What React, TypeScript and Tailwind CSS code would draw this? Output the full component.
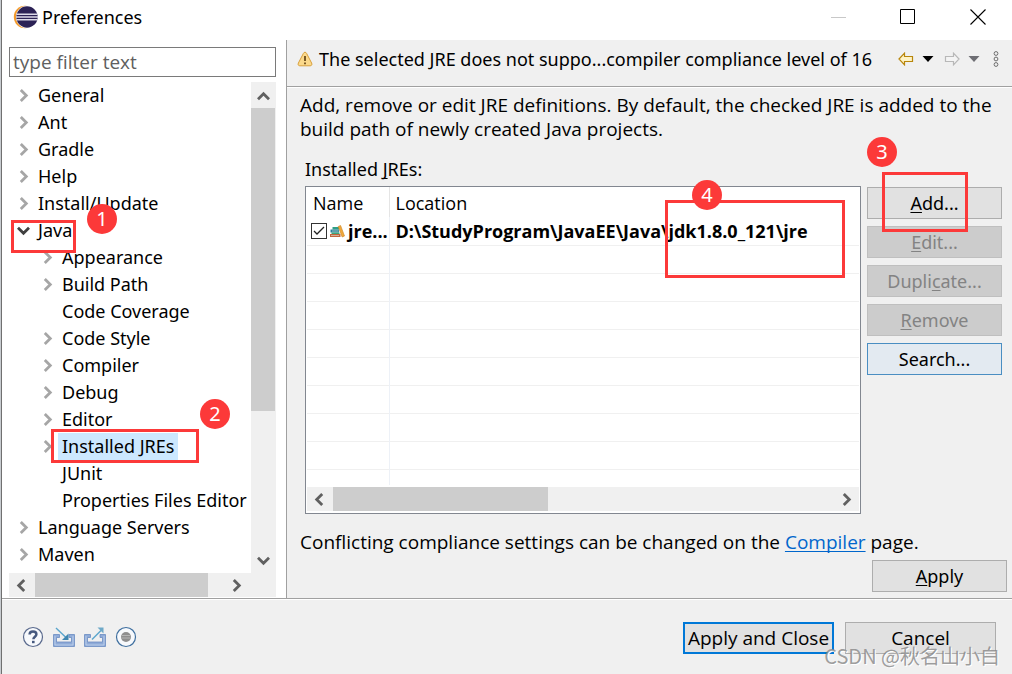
import { useState } from 'react';
import type { ReactNode } from 'react';
import clsx from 'clsx';

interface TreeNode {
  label: string;
  level: 0 | 1;
  state: 'closed' | 'open' | 'leaf';
}

const TREE: TreeNode[] = [
  { label: 'General', level: 0, state: 'closed' },
  { label: 'Ant', level: 0, state: 'closed' },
  { label: 'Gradle', level: 0, state: 'closed' },
  { label: 'Help', level: 0, state: 'closed' },
  { label: 'Install/Update', level: 0, state: 'closed' },
  { label: 'Java', level: 0, state: 'open' },
  { label: 'Appearance', level: 1, state: 'closed' },
  { label: 'Build Path', level: 1, state: 'closed' },
  { label: 'Code Coverage', level: 1, state: 'leaf' },
  { label: 'Code Style', level: 1, state: 'closed' },
  { label: 'Compiler', level: 1, state: 'closed' },
  { label: 'Debug', level: 1, state: 'closed' },
  { label: 'Editor', level: 1, state: 'closed' },
  { label: 'Installed JREs', level: 1, state: 'closed' },
  { label: 'JUnit', level: 1, state: 'leaf' },
  { label: 'Properties Files Editor', level: 1, state: 'leaf' },
  { label: 'Language Servers', level: 0, state: 'closed' },
  { label: 'Maven', level: 0, state: 'closed' },
];

const EMPTY_ROWS = 8;

type Direction = 'up' | 'down' | 'left' | 'right';

const CHEVRONS: Record<Direction, string> = {
  up: 'M1 11.2 6.5 5.7 12 11.2',
  down: 'M1 3.8 6.5 9.3 12 3.8',
  left: 'M9.2 1 3.7 6.5 9.2 12',
  right: 'M3.8 1 9.3 6.5 3.8 12',
};

function Chevron({ dir, color = '#606060' }: { dir: Direction; color?: string }) {
  return (
    <svg width="13" height="13" viewBox="0 0 13 13" fill="none" className="shrink-0">
      <path d={CHEVRONS[dir]} stroke={color} strokeWidth="2.8" />
    </svg>
  );
}

function ScrollArrow({ dir }: { dir: Direction }) {
  return (
    <button aria-label={`Scroll ${dir}`} className="flex size-[25px] shrink-0 items-center justify-center">
      <Chevron dir={dir} />
    </button>
  );
}

// Numbered red marker of the walkthrough
function Step({ n, className }: { n: number; className: string }) {
  return (
    <span
      className={clsx(
        'pointer-events-none absolute z-20 flex size-[30px] items-center justify-center rounded-full bg-[#fc3939] text-xl leading-none text-white',
        className
      )}
    >
      {n}
    </span>
  );
}

function Frame({ className }: { className: string }) {
  return <span className={clsx('pointer-events-none absolute z-10 border-3 border-[#fc3939]', className)} />;
}

interface PushButtonProps {
  children: ReactNode;
  disabled?: boolean;
  className?: string;
}

function PushButton({ children, disabled, className = 'w-[135px] border border-[#adadad] bg-[#e1e1e1]' }: PushButtonProps) {
  return (
    <button
      disabled={disabled}
      className={clsx(
        'flex h-8 shrink-0 items-center justify-center whitespace-nowrap',
        disabled ? 'w-[135px] border border-[#bfbfbf] bg-[#cccccc] text-[#838383]' : className
      )}
    >
      <span>{children}</span>
    </button>
  );
}

function Mnemonic({ children }: { children: string }) {
  return <span className="underline decoration-1 underline-offset-2 [text-decoration-skip-ink:none]">{children}</span>;
}

function EclipseLogo() {
  return (
    <svg width="25" height="24" viewBox="0 0 25 24" className="shrink-0">
      <circle cx="12" cy="12" r="11.2" fill="#f39a2b" />
      <circle cx="14.2" cy="12" r="11.2" fill="#fff" />
      <circle cx="14" cy="12" r="10.7" fill="#2c2255" />
      <path d="M3.4 9.2h21.1M3 12h22M3.4 14.8h21.1" stroke="#dcd9e8" strokeWidth="1.4" />
    </svg>
  );
}

function TitleBar() {
  return (
    <header className="flex h-10 shrink-0 items-center bg-white pb-1.5 pl-[11px]">
      <div className="flex flex-1 items-center gap-1">
        <EclipseLogo />
        <h1>Preferences</h1>
      </div>
      <div className="flex items-center gap-12 pr-[26px]">
        <button aria-label="Minimize" disabled>
          <svg width="22" height="16" viewBox="0 0 22 16">
            <path d="M1 8.5h15" stroke="#c8c8c8" />
          </svg>
        </button>
        <button aria-label="Maximize">
          <svg width="22" height="16" viewBox="0 0 22 16">
            <path d="M.5 .5h14v14H.5z" fill="none" stroke="#000" />
          </svg>
        </button>
        <button aria-label="Close">
          <svg width="16" height="16" viewBox="0 0 16 16">
            <path d="M.5 .5 15.5 15.5M15.5 .5 .5 15.5" stroke="#000" strokeWidth="1.1" />
          </svg>
        </button>
      </div>
    </header>
  );
}

function Sidebar() {
  const [filter, setFilter] = useState('');
  const [selected, setSelected] = useState('Installed JREs');

  return (
    <aside className="flex w-[284px] shrink-0 flex-col bg-white pt-[7px] pr-2.5 pl-[7px]">
      <input
        aria-label="Filter"
        value={filter}
        onChange={e => setFilter(e.target.value)}
        placeholder="type filter text"
        className="h-[30px] w-full border border-[#7a7a7a] px-[3px] font-['Open_Sans',sans-serif] text-[19px] outline-none placeholder:text-[#606060]"
      />

      <div className="mt-[5px] flex flex-1">
        <ul className="relative min-w-0 flex-1">
          {TREE.map(node => (
            <li key={node.label}>
              <button
                onClick={() => setSelected(node.label)}
                className={clsx('flex h-[27px] items-center whitespace-nowrap', node.level === 0 ? 'pl-2' : 'pl-8')}
              >
                <span className="flex w-[17px] shrink-0">
                  {node.state !== 'leaf' && (
                    <Chevron
                      dir={node.state === 'open' ? 'down' : 'right'}
                      color={node.state === 'open' ? '#404040' : '#a6a6a6'}
                    />
                  )}
                </span>
                <span className={clsx('px-1 leading-[27px]', selected === node.label && 'bg-[#cce8ff]')}>
                  {node.label}
                </span>
              </button>
            </li>
          ))}
          <Frame className="top-[138px] left-[2px] h-[33px] w-[65px]" />
          <Step n={1} className="top-[122px] left-[78px]" />
          <Frame className="top-[347px] left-[42px] h-[34px] w-[148px]" />
          <Step n={2} className="top-[317px] left-[191px]" />
        </ul>
        <div className="flex w-[25px] shrink-0 flex-col bg-[#f0f0f0]">
          <ScrollArrow dir="up" />
          <div className="flex-1 py-px">
            <div className="h-[69%] w-6 bg-[#cdcdcd]" />
          </div>
          <ScrollArrow dir="down" />
        </div>
      </div>

      <div className="mb-px flex h-6 shrink-0 bg-[#f0f0f0] pr-[27px]">
        <ScrollArrow dir="left" />
        <div className="flex-1 px-px">
          <div className="h-full w-[92%] bg-[#cdcdcd]" />
        </div>
        <ScrollArrow dir="right" />
      </div>
    </aside>
  );
}

function PageHeader() {
  return (
    <div className="flex h-[46px] shrink-0 items-center gap-1.5 pr-3 pb-2 pl-2.5">
      <svg width="16" height="16" viewBox="0 0 16 16" className="shrink-0">
        <path
          d="M8 1.2c.8 0 1.2.5 1.6 1.2l5 9.6c.7 1.5.2 2.8-1.4 2.8H2.8c-1.6 0-2.1-1.3-1.4-2.8l5-9.6C6.8 1.7 7.2 1.2 8 1.2z"
          fill="#fbd98b"
          stroke="#d9a03c"
        />
        <path d="M8 5v5M8 11.5v1.8" stroke="#6b4a1a" strokeWidth="1.8" />
      </svg>
      <h2 className="min-w-0 flex-1 whitespace-nowrap">The selected JRE does not suppo...compiler compliance level of 16</h2>
      <div className="flex shrink-0 items-center gap-2">
        <button aria-label="Back">
          <svg width="16" height="14" viewBox="0 0 16 14" className="block">
            <path d="M1 7 6.5 1.2v3.3h8v5h-8v3.3z" fill="#fff3c4" stroke="#b8860b" strokeWidth="1.2" />
          </svg>
        </button>
        <button aria-label="Back history">
          <svg width="12" height="14" viewBox="0 0 12 14" className="block">
            <path d="M.5 4h11L6 10z" fill="#000" />
          </svg>
        </button>
        <button aria-label="Forward" className="pl-0.5">
          <svg width="16" height="14" viewBox="0 0 16 14" className="block">
            <path d="M15 7 9.5 1.2v3.3h-8v5h8v3.3z" fill="#f4f4f4" stroke="#b8b8b8" strokeWidth="1.2" />
          </svg>
        </button>
        <button aria-label="Forward history">
          <svg width="12" height="14" viewBox="0 0 12 14" className="block">
            <path d="M.5 4h11L6 10z" fill="#6e6e73" />
          </svg>
        </button>
        <button aria-label="View menu" className="pl-1">
          <svg width="8" height="16" viewBox="0 0 8 16" className="block">
            <g fill="none" stroke="#6e6e6e">
              <circle cx="4" cy="2.5" r="1.9" />
              <circle cx="4" cy="8" r="1.9" />
              <circle cx="4" cy="13.5" r="1.9" />
            </g>
          </svg>
        </button>
      </div>
    </div>
  );
}

function LibraryIcon() {
  return (
    <svg width="15" height="14" viewBox="0 0 15 14" className="shrink-0">
      <path d="M2.5 3h6.500v2.500H2.500z" fill="#2f9f86" />
      <path d="M.5 5.500h8.500v3H.5z" fill="#2d7f9a" />
      <path d="M1.500 8.500h8v1.500h-8z" fill="#3aa57c" />
      <path d="M0 10h10.500v3H0z" fill="#c4643c" />
      <path d="M2 7h6.500M1 11.500h8" stroke="#d9e6dc" strokeWidth=".6" />
      <path d="M8.200 2.500 10.600 1.500l3.900 10.500-2.400 1z" fill="#f0a83c" stroke="#c98420" strokeWidth=".6" />
    </svg>
  );
}

function JreTable() {
  const [checked, setChecked] = useState(true);

  return (
    <div className="relative flex min-w-0 flex-1 flex-col border border-[#828790] bg-white">
      <div className="flex-1 overflow-hidden px-px">
        <table className="w-full table-fixed border-collapse text-left font-['Open_Sans',sans-serif]">
          <thead>
            <tr className="h-[30px]">
              <th className="w-[82px] border-r border-[#e5e5e5] p-0 pt-0.5 pl-[6px] font-normal">Name</th>
              <th className="p-0 pt-0.5 pl-[6px] font-normal">Location</th>
            </tr>
          </thead>
          <tbody>
            <tr className="h-7 border-b border-[#f0f0f0] font-bold">
              <td className="border-r border-[#edf1f7] p-0">
                <label className="flex items-center gap-[3px] pl-1 whitespace-nowrap">
                  <span className="relative flex size-4 shrink-0">
                    <input
                      type="checkbox"
                      checked={checked}
                      onChange={e => setChecked(e.target.checked)}
                      className="size-4 appearance-none border border-[#333333] bg-white"
                    />
                    {checked && (
                      <svg width="16" height="16" viewBox="0 0 16 16" fill="none" className="pointer-events-none absolute inset-0">
                        <path d="M3 8l3 3 7-7" stroke="#222" strokeWidth="1.3" />
                      </svg>
                    )}
                  </span>
                  <LibraryIcon />
                  jre...
                </label>
              </td>
              <td className="truncate py-0 pr-0 pl-[6px]">D:\StudyProgram\JavaEE\Java\jdk1.8.0_121\jre</td>
            </tr>
            {Array.from({ length: EMPTY_ROWS }, (_, i) => (
              <tr key={i} className="h-7 border-b border-[#f0f0f0]">
                <td className="border-r border-[#edf1f7]" />
                <td />
              </tr>
            ))}
            <tr className="h-4">
              <td className="border-r border-[#edf1f7] p-0" />
              <td className="p-0" />
            </tr>
          </tbody>
        </table>
      </div>
      <div className="mx-px mb-0.5 flex h-6 shrink-0 items-center bg-[#f0f0f0]">
        <ScrollArrow dir="left" />
        <div className="h-full flex-1 px-px">
          <div className="h-full w-[43%] bg-[#cdcdcd]" />
        </div>
        <ScrollArrow dir="right" />
      </div>
      <Frame className="top-[13px] right-[15px] h-[78px] w-[180px]" />
      <Step n={4} className="-top-[7px] right-[138px]" />
    </div>
  );
}

function PreferencePage() {
  return (
    <main className="flex min-w-0 flex-1 flex-col border-l border-[#a0a0a0]">
      <PageHeader />
      <div className="flex flex-1 flex-col border-t border-[#a0a0a0] shadow-[inset_0_1px_0_#ffffff]">
        <p className="px-[13px] pt-[6px] font-['Open_Sans',sans-serif] text-[19px] leading-6">
          Add, remove or edit JRE definitions. By default, the checked JRE is added to the build path of newly created
          Java projects.
        </p>
        <h3 className="mt-4 pl-[18px]">
          Installed <Mnemonic>J</Mnemonic>REs:
        </h3>
        <div className="mt-[5px] flex flex-1 gap-1.5 pr-2.5 pl-[18px]">
          <JreTable />
          <div className="relative flex shrink-0 flex-col gap-[7px] pt-px">
            <PushButton>
              <Mnemonic>A</Mnemonic>dd...
            </PushButton>
            <PushButton disabled>
              <Mnemonic>E</Mnemonic>dit...
            </PushButton>
            <PushButton disabled>
              Dupli<Mnemonic>c</Mnemonic>ate...
            </PushButton>
            <PushButton disabled>
              <Mnemonic>R</Mnemonic>emove
            </PushButton>
            <PushButton className="w-[135px] border border-[#4a8ec2] bg-[#e3eaf1]">Search...</PushButton>
            <Frame className="-top-[14px] left-[15px] h-[60px] w-[86px]" />
            <Step n={3} className="-top-[49px] left-0" />
          </div>
        </div>
        <p className="mt-4 px-[13px] font-['Open_Sans',sans-serif] text-[19px] leading-6">
          Conflicting compliance settings can be changed on the{' '}
          <a
            href="#compiler"
            className="text-[#0066cc] underline decoration-1 underline-offset-2 [text-decoration-skip-ink:none]"
          >
            Compiler
          </a>{' '}
          page.
        </p>
        <div className="mt-[6px] flex justify-end pr-[5px] pb-[6px]">
          <PushButton>
            <Mnemonic>A</Mnemonic>pply
          </PushButton>
        </div>
      </div>
    </main>
  );
}

function FooterIcons() {
  return (
    <div className="flex items-center gap-[9px] pb-0.5">
      <button aria-label="Help">
        <svg width="22" height="22" viewBox="0 0 22 22" fill="none" className="block">
          <circle cx="11" cy="11" r="9.5" fill="#f7f9fc" stroke="#5a6a8d" strokeWidth="1.2" />
          <path d="M7.6 8.6c0-2 1.4-3.2 3.4-3.2s3.4 1.1 3.4 2.9c0 2.4-3 2.5-3 5" stroke="#46597f" strokeWidth="2.5" />
          <path d="M10 14.8h2.6v2.4H10z" fill="#46597f" />
        </svg>
      </button>
      <button aria-label="Import preferences">
        <svg width="22" height="22" viewBox="0 0 22 22" fill="none" className="block">
          <path d="M6.5 8.5H.5v12h21v-12H16v3h2.500v4.500H3.500v-4.500h3z" fill="#8fabd8" stroke="#6a8cc2" strokeWidth=".8" />
          <path d="M2 10v9h18v-9" stroke="#c4d5ee" strokeWidth=".8" />
          <path d="M3 2l10.5 10" stroke="#5aa5cc" strokeWidth="1.4" />
          <path d="M15.5 7.500V14H9z" fill="#3f86b0" />
        </svg>
      </button>
      <button aria-label="Export preferences">
        <svg width="22" height="22" viewBox="0 0 22 22" fill="none" className="block">
          <path d="M6.5 8.5H.5v12h21v-12H16v3h2.500v4.500H3.500v-4.500h3z" fill="#8fabd8" stroke="#6a8cc2" strokeWidth=".8" />
          <path d="M2 10v9h18v-9" stroke="#c4d5ee" strokeWidth=".8" />
          <path d="M8 13.5 17.5 4" stroke="#5aa5cc" strokeWidth="1.4" />
          <path d="M13.5 1.5h6v6z" fill="#6fa9c8" />
        </svg>
      </button>
      <button aria-label="Record preferences">
        <svg width="22" height="22" viewBox="0 0 22 22" fill="none" className="block">
          <circle cx="11" cy="11" r="9.5" fill="#f7f9fc" stroke="#3f6f9f" strokeWidth="1.2" />
          <circle cx="11" cy="11" r="5" fill="#8e8e8e" />
          <path d="M6.8 9.5h8.4M6.5 12h9" stroke="#b5b5b5" />
        </svg>
      </button>
    </div>
  );
}

export default function App() {
  return (
    <div className="relative flex min-h-screen bg-[#f0f0f0] font-['Noto_Sans','Noto_Sans_CJK_SC',sans-serif] text-lg leading-6 text-black">
      <div className="w-0.5 shrink-0 border-r border-[#707070] bg-[#c8ccd0]" />
      <div className="flex min-w-0 flex-1 flex-col">
        <TitleBar />
        <div className="flex flex-1">
          <Sidebar />
          <PreferencePage />
        </div>
        <footer className="flex h-[76px] shrink-0 items-center justify-between border-t border-[#a0a0a0] pt-0.5 pr-4 pl-5 shadow-[inset_0_1px_0_#ffffff]">
          <FooterIcons />
          <div className="flex gap-[11px] font-['Open_Sans',sans-serif] text-[19px]">
            <PushButton className="w-[151px] border-2 border-[#0078d7] bg-[#e1e1e1]">Apply and Close</PushButton>
            <PushButton className="w-[151px] border border-[#adadad] bg-[#e1e1e1]">Cancel</PushButton>
          </div>
        </footer>
      </div>
      <span className="pointer-events-none absolute right-3 bottom-[6px] font-['Noto_Sans_CJK_SC',sans-serif] text-xl leading-6 text-[#858585]/80 [text-shadow:1px_1px_0_#ffffff]">
        CSDN @秋名山小白
      </span>
    </div>
  );
}
